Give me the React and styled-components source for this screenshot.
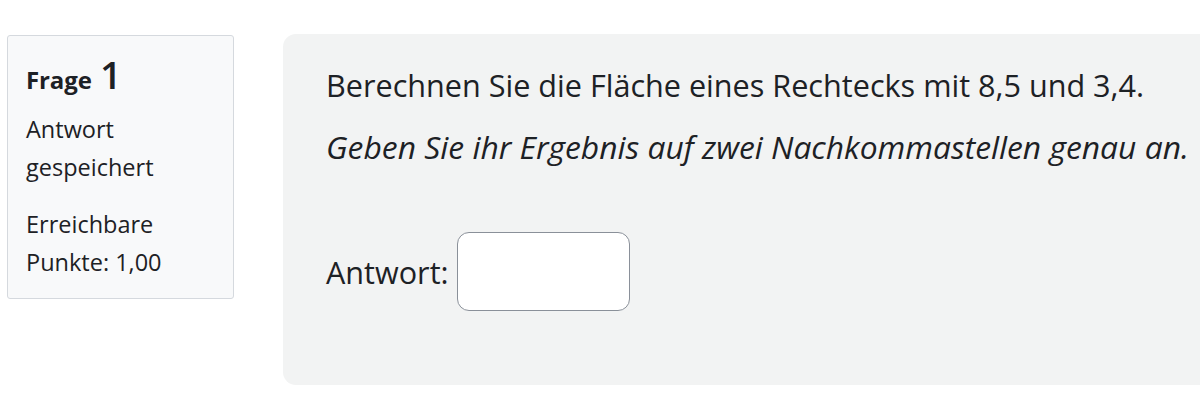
import React from 'react';
import styled, { createGlobalStyle } from 'styled-components';

const GlobalStyle = createGlobalStyle`
    html, body {
        margin: 0;
        padding: 0;
        background: #ffffff;
        overflow: hidden;
    }
    body {
        font-family: "Open Sans", "Noto Sans", sans-serif;
        color: #1d2125;
    }
`;

const Question = styled.div
`   display: flex;
    align-items: flex-start;
    gap: 49px;
    padding: 34px 0 0 7px;
    width: 1400px;
`;

const Info = styled.div
`   box-sizing: border-box;
    flex: 0 0 227px;
    margin-top: 1px;
    height: 264px;
    padding: 20px 18px;
    background: #f8f9fa;
    border: 1px solid #d5d9de;
    border-radius: 3px;
`;

const Title = styled.h3
`   margin: 0 0 12px;
    font-size: 24px;
    font-weight: 700;
    line-height: 36px;
    letter-spacing: -0.1px;
`;

const Number = styled.span
`   margin-left: 2px;
    font-size: 38px;
    font-weight: 600;
`;

const InfoText = styled.p
`   margin: 0 0 19px;
    font-size: 23.5px;
    line-height: 38px;
`;

const Content = styled.div
`   box-sizing: border-box;
    flex: 0 0 1000px;
    height: 351px;
    padding: 29px 43px;
    background: #f2f3f3;
    border-radius: 13px;
`;

const Text = styled.p
`   margin: 0 0 16px;
    font-size: ${props => props.italic ? '31.8px' : '30.6px'};
    line-height: 45px;
    font-style: ${props => props.italic ? 'italic' : 'normal'};
`;

const Answer = styled.div
`   display: flex;
    align-items: center;
    gap: 8px;
    margin-top: 63px;
    font-size: 30.6px;
`;

const Input = styled.input
`   box-sizing: border-box;
    width: 173px;
    height: 79px;
    background: #ffffff;
    border: 1.5px solid #8a9099;
    border-radius: 12px;
    outline: none;
`;

const App = () =>
{
    return (
        <>
            <GlobalStyle />
            <Question>
                <Info>
                    <Title>Frage <Number>1</Number></Title>
                    <InfoText>Antwort gespeichert</InfoText>
                    <InfoText>Erreichbare Punkte: 1,00</InfoText>
                </Info>
                <Content>
                    <Text>Berechnen Sie die Fläche eines Rechtecks mit 8,5 und 3,4.</Text>
                    <Text italic>Geben Sie ihr Ergebnis auf zwei Nachkommastellen genau an.</Text>
                    <Answer>
                        <span>Antwort:</span>
                        <Input type="text" />
                    </Answer>
                </Content>
            </Question>
        </>
    );
}

export default App;
